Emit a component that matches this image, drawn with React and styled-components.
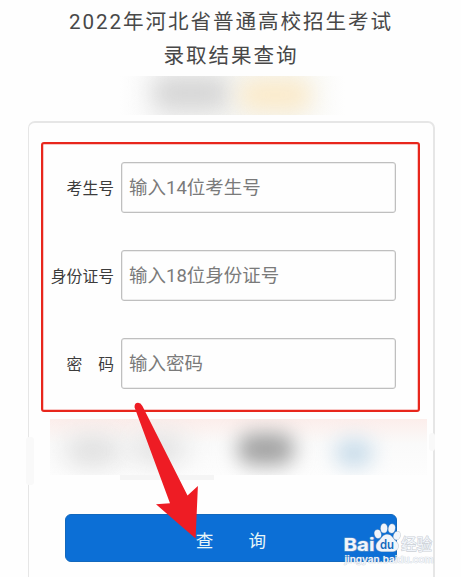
import React from 'react';
import styled, { createGlobalStyle } from 'styled-components';

const GlobalStyle = createGlobalStyle`
  * {
    box-sizing: border-box;
  }

  body {
    margin: 0;
    background: #fefefe;
    font-family: Roboto, "Noto Sans CJK SC", sans-serif;
    overflow: hidden;
  }
`

const Page = styled.main`
  position: relative;
  display: flex;
  flex-direction: column;
  width: 461px;
  height: 577px;
  overflow: hidden;
`

const Title = styled.h1`
  flex: none;
  width: 461px;
  height: 76px;
  margin: 0;
  padding: 5px 0 0 1px;
  font-size: 20.6px;
  font-weight: 400;
  line-height: 34px;
  letter-spacing: 1.9px;
  text-align: center;
  color: #484848;
  white-space: nowrap;
`

const BlurredBanner = styled.div`
  flex: none;
  width: 225px;
  height: 39px;
  margin-left: 120px;
  overflow: hidden;
  background: linear-gradient(90deg, #fefefe, #f5f5f5 22%, #f6f6f1 75%, #fefefe);
`

const BlurredRow = styled.div`
  width: 377px;
  height: 56px;
  margin: 7px 0 0 9px;
  overflow: hidden;
  background: linear-gradient(180deg, #fceeeb, #fafafa 45%, #fdfdfd);
`

const Blob = styled.div`
  width: ${props => props.$w}px;
  height: ${props => props.$h}px;
  margin: ${props => props.$top}px 0 0 ${props => props.$gap}px;
  border-radius: 14px;
  background: ${props => props.$color};
  filter: blur(${props => props.$blur || 11}px);
`

const Blobs = styled.div`
  display: flex;
  align-items: flex-start;
`

const Card = styled.section`
  flex: none;
  width: 407px;
  height: 480px;
  margin: 6px 0 0 28px;
  padding: 19px 0 0 12px;
  border: 2px solid #e6e6e6;
  border-left-width: 1px;
  border-radius: 7px;
`

const Fields = styled.form`
  display: flex;
  flex-direction: column;
  gap: 37px;
  width: 379px;
  height: 270px;
  padding: 18px 22px 0 0;
  border: 2px solid #e8261c;
  border-radius: 3px;
  box-shadow: inset 0 0 0 0.5px #e8261c80;
`

const Field = styled.label`
  display: flex;
  align-items: center;
  justify-content: flex-end;
  gap: 7px;
  font-size: 15.8px;
  color: #3c3c3c;
  white-space: pre;
`

const Input = styled.input`
  width: 275px;
  height: 51px;
  padding: 1px 0 0 7px;
  border: 1px solid #bfbfbf;
  border-radius: 3px;
  background: transparent;
  box-shadow: inset 0 0 0 0.5px #dcdcdc;
  font-family: inherit;
  font-size: 18.5px;
  outline: none;

  &::placeholder {
    color: #7a7a7a;
    opacity: 1;
  }
`

const Underline = styled.div`
  width: 94px;
  height: 5px;
  margin-left: 79px;
  background: #f5f5f5;
`

const SubmitButton = styled.button`
  display: block;
  width: 332px;
  height: 48px;
  margin: 34px 0 0 24px;
  padding: 2px 0 0;
  border: 1px solid #1268bd;
  border-radius: 6px;
  background: #0c6fd6;
  color: #e8f6f8;
  font-family: inherit;
  font-size: 17.6px;
  white-space: pre;
`

const Smudge = styled.div`
  position: absolute;
  left: ${props => props.$x}px;
  top: ${props => props.$y}px;
  width: ${props => props.$w}px;
  height: ${props => props.$h}px;
  border-radius: 3px;
  background: #f9f9f9;
`

const Overlay = styled.svg`
  position: absolute;
  inset: 0;
  pointer-events: none;
`

const FormField = ({ label, placeholder }) => (
  <Field>
    {label}
    <Input placeholder={placeholder} />
  </Field>
)

const Arrow = () => (
  <path
    d="M134.6 407.5 Q134.2 403 138 402.8 Q140.7 402.8 142.4 406 L187.5 495.5 L197.9 486 L195.6 538.4 L156 504.3 L170 503.2 Z"
    fill="#ee1c24"
  />
)

const Watermark = () => (
  <g
    fill="#f1f5fb"
    stroke="#a9b1bb"
    strokeOpacity="0.6"
    strokeWidth="1.2"
    paintOrder="stroke"
    fontFamily='Inter, "Noto Sans CJK SC", sans-serif'
    fontWeight="700"
  >
    <text x="343.5" y="550.8" fontSize="18" textLength="31" lengthAdjust="spacingAndGlyphs">Bai</text>
    <ellipse cx="377.8" cy="534" rx="3.2" ry="4.2" transform="rotate(-15 377.8 534)" />
    <ellipse cx="384" cy="528.2" rx="3.2" ry="4.5" />
    <ellipse cx="391.8" cy="528.5" rx="3.2" ry="4.4" transform="rotate(12 391.8 528.5)" />
    <ellipse cx="396.9" cy="535.6" rx="3.2" ry="4.2" transform="rotate(20 396.9 535.6)" />
    <path d="M387 534.5 C391.5 534.5 392.5 538.2 395.6 541 C400.2 545 398.2 551.4 393 551.4 L381.5 551.4 C375.3 551.4 374.7 544.5 378.8 541 C382 538.3 382.7 534.5 387 534.5 Z" />
    <text x="380" y="549.2" fontSize="12.5" fontWeight="600" fill="#1469bd" stroke="none" textLength="14" lengthAdjust="spacingAndGlyphs">du</text>
    <text x="401" y="550" fontSize="15.5" fontWeight="400">经验</text>
    <text x="344.5" y="563" fontSize="9.4" fontWeight="600" strokeWidth="0.7" textLength="89" lengthAdjust="spacingAndGlyphs">jingyan.baidu.com</text>
  </g>
)

const App = () => {

  return (
    <>
      <GlobalStyle />
      <Page>
        <Title>
          2022年河北省普通高校招生考试<br />
          录取结果查询
        </Title>
        <BlurredBanner>
          <Blobs>
            <Blob $w={76} $h={34} $top={0} $gap={33} $color="#d6d6d6" />
            <Blob $w={72} $h={30} $top={4} $gap={10} $color="#fbeac9" />
          </Blobs>
        </BlurredBanner>
        <Card>
          <Fields>
            <FormField label="考生号" placeholder="输入14位考生号" />
            <FormField label="身份证号" placeholder="输入18位身份证号" />
            <FormField label="密　码" placeholder="输入密码" />
          </Fields>
          <BlurredRow>
            <Blobs>
              <Blob $w={54} $h={28} $top={18} $gap={16} $color="#dcdcdc" $blur={13} />
              <Blob $w={54} $h={28} $top={16} $gap={12} $color="#e0e0e0" $blur={13} />
              <Blob $w={56} $h={32} $top={14} $gap={52} $color="#a2a2a2" $blur={10} />
              <Blob $w={38} $h={28} $top={20} $gap={41} $color="#c8dcea" $blur={10} />
            </Blobs>
          </BlurredRow>
          <Underline />
          <SubmitButton>查　　询</SubmitButton>
        </Card>
        <Smudge $x={26} $y={437} $w={8} $h={48} />
        <Smudge $x={429} $y={433} $w={6} $h={18} />
        <Overlay width="461" height="577" viewBox="0 0 461 577">
          <Watermark />
          <Arrow />
        </Overlay>
      </Page>
    </>
  )
}

export default App
